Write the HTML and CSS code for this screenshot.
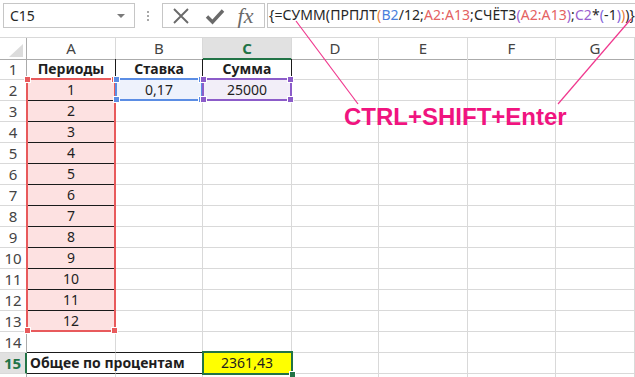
FILE: index.html
```html
<!DOCTYPE html>
<html lang="ru">
<head>
    <meta charset="UTF-8">
    <title>ПРПЛТ - массивная формула</title>
    <link rel="stylesheet" href="styles.css">
</head>
<body>
    <div class="app">
        <!-- Formula bar -->
        <div class="formula-bar">
            <div class="name-box"><span>C15</span><span class="arrow"></span></div>
            <div class="grip"><i></i><i></i><i></i></div>
            <div class="fx-buttons">
                <svg class="icon" width="18" height="18" viewBox="0 0 18 18"><path d="M2 2 L16 16 M16 2 L2 16" stroke="#6a6a6a" stroke-width="1.9" fill="none"/></svg>
                <svg class="icon" width="20" height="18" viewBox="0 0 20 18"><path d="M2 9.5 L7.5 15 L18 3.5" stroke="#6a6a6a" stroke-width="3.4" fill="none"/></svg>
                <span class="fx">fx</span>
            </div>
            <div class="formula-input">{=СУММ(ПРПЛТ<span class="f-orange">(</span><span class="f-blue">B2</span>/12;<span class="f-red">A2:A13</span>;СЧЁТЗ<span class="f-purple">(</span><span class="f-red">A2:A13</span><span class="f-purple">)</span>;<span class="f-purple">C2</span>*<span class="f-violet">(</span>-1<span class="f-violet">)</span><span class="f-orange">)</span>)}</div>
        </div>

        <!-- Sheet -->
        <div class="sheet">
            <div class="row head">
                <div class="c corner"><span class="tri"></span></div>
                <div class="c">A</div>
                <div class="c">B</div>
                <div class="c active">C</div>
                <div class="c">D</div>
                <div class="c">E</div>
                <div class="c">F</div>
                <div class="c">G</div>
            </div>
            <div class="row">
                <div class="c rh">1</div>
                <div class="c bold bk-r bk-b">Периоды</div>
                <div class="c bold bk-r bk-b">Ставка</div>
                <div class="c bold bk-r bk-b">Сумма</div>
                <div class="c"></div><div class="c"></div><div class="c"></div><div class="c"></div>
            </div>
            <div class="row">
                <div class="c rh">2</div>
                <div class="c pink bk-b">1</div>
                <div class="c blue">0,17</div>
                <div class="c lilac">25000</div>
                <div class="c"></div><div class="c"></div><div class="c"></div><div class="c"></div>
            </div>
            <div class="row">
                <div class="c rh">3</div>
                <div class="c pink bk-b">2</div>
                <div class="c"></div><div class="c"></div><div class="c"></div><div class="c"></div><div class="c"></div><div class="c"></div>
            </div>
            <div class="row">
                <div class="c rh">4</div>
                <div class="c pink bk-b">3</div>
                <div class="c"></div><div class="c"></div><div class="c"></div><div class="c"></div><div class="c"></div><div class="c"></div>
            </div>
            <div class="row">
                <div class="c rh">5</div>
                <div class="c pink bk-b">4</div>
                <div class="c"></div><div class="c"></div><div class="c"></div><div class="c"></div><div class="c"></div><div class="c"></div>
            </div>
            <div class="row">
                <div class="c rh">6</div>
                <div class="c pink bk-b">5</div>
                <div class="c"></div><div class="c"></div><div class="c"></div><div class="c"></div><div class="c"></div><div class="c"></div>
            </div>
            <div class="row">
                <div class="c rh">7</div>
                <div class="c pink bk-b">6</div>
                <div class="c"></div><div class="c"></div><div class="c"></div><div class="c"></div><div class="c"></div><div class="c"></div>
            </div>
            <div class="row">
                <div class="c rh">8</div>
                <div class="c pink bk-b">7</div>
                <div class="c"></div><div class="c"></div><div class="c"></div><div class="c"></div><div class="c"></div><div class="c"></div>
            </div>
            <div class="row">
                <div class="c rh">9</div>
                <div class="c pink bk-b">8</div>
                <div class="c"></div><div class="c"></div><div class="c"></div><div class="c"></div><div class="c"></div><div class="c"></div>
            </div>
            <div class="row">
                <div class="c rh">10</div>
                <div class="c pink bk-b">9</div>
                <div class="c"></div><div class="c"></div><div class="c"></div><div class="c"></div><div class="c"></div><div class="c"></div>
            </div>
            <div class="row">
                <div class="c rh">11</div>
                <div class="c pink bk-b">10</div>
                <div class="c"></div><div class="c"></div><div class="c"></div><div class="c"></div><div class="c"></div><div class="c"></div>
            </div>
            <div class="row">
                <div class="c rh">12</div>
                <div class="c pink bk-b">11</div>
                <div class="c"></div><div class="c"></div><div class="c"></div><div class="c"></div><div class="c"></div><div class="c"></div>
            </div>
            <div class="row">
                <div class="c rh">13</div>
                <div class="c pink">12</div>
                <div class="c"></div><div class="c"></div><div class="c"></div><div class="c"></div><div class="c"></div><div class="c"></div>
            </div>
            <div class="row">
                <div class="c rh">14</div>
                <div class="c bk-b"></div>
                <div class="c bk-b"></div>
                <div class="c"></div><div class="c"></div><div class="c"></div><div class="c"></div><div class="c"></div>
            </div>
            <div class="row">
                <div class="c rh active-row">15</div>
                <div class="c bold left spill bk-b">Общее по процентам</div>
                <div class="c bk-r bk-b"></div>
                <div class="c yellow">2361,43</div>
                <div class="c"></div><div class="c"></div><div class="c"></div><div class="c"></div>
            </div>
            <div class="row">
                <div class="c rh"></div>
                <div class="c"></div><div class="c"></div><div class="c"></div><div class="c"></div><div class="c"></div><div class="c"></div><div class="c"></div>
            </div>

            <!-- Range highlights from the formula -->
            <div class="range range-a"><i class="h tl"></i><i class="h tr"></i><i class="h bl"></i><i class="h br"></i></div>
            <div class="range range-b"><i class="h tl"></i><i class="h tr"></i><i class="h bl"></i><i class="h br"></i></div>
            <div class="range range-c"><i class="h tl"></i><i class="h tr"></i><i class="h bl"></i><i class="h br"></i></div>
            <div class="selection"><i class="fill-handle"></i></div>

            <div class="note">CTRL+SHIFT+Enter</div>
        </div>

        <svg class="callout" width="635" height="377" viewBox="0 0 635 377">
            <line x1="296" y1="21" x2="358" y2="104" stroke="#f0388e" stroke-width="1.2"/>
            <line x1="631" y1="19" x2="558" y2="104" stroke="#f0388e" stroke-width="1.2"/>
        </svg>
    </div>
</body>
</html>
```

FILE: styles.css
```css
* {
    margin: 0;
    padding: 0;
    box-sizing: border-box;
}

body {
    background: white;
    font-family: 'Noto Sans', 'Open Sans', sans-serif;
    overflow: hidden;
}

.app {
    position: relative;
    width: 635px;
    height: 377px;
    overflow: hidden;
}

/* Formula bar */
.formula-bar {
    height: 37px;
    display: flex;
    align-items: flex-start;
    padding: 3px 0 0 3px;
}

.name-box {
    width: 141px;
    height: 25px;
    border: 1px solid #c6c6c6;
    display: flex;
    align-items: center;
    justify-content: space-between;
    padding: 0 9px 0 6px;
    font-size: 14px;
    color: #262626;
}

.name-box .arrow {
    width: 0;
    height: 0;
    border-left: 4px solid transparent;
    border-right: 4px solid transparent;
    border-top: 4px solid #7a7a7a;
}

.grip {
    width: 29px;
    display: flex;
    flex-direction: column;
    align-items: center;
    gap: 2px;
    padding: 8px 0 0 0;
}

.grip i {
    width: 2px;
    height: 2px;
    background: #a8a8a8;
}

.fx-buttons {
    width: 111px;
    height: 25px;
    border: 1px solid #c6c6c6;
    display: flex;
    align-items: center;
    gap: 15px;
    padding-left: 9px;
}

.fx {
    font-family: 'Liberation Serif', serif;
    font-style: italic;
    font-size: 22px;
    color: #6a6a6a;
    line-height: 21px;
    margin-left: -2px;
}

.formula-input {
    flex: 1;
    height: 25px;
    margin-left: 2px;
    border: 1px solid #c6c6c6;
    border-right: none;
    padding-left: 1px;
    font-size: 14px;
    letter-spacing: 0.08px;
    line-height: 22px;
    white-space: nowrap;
    color: #262626;
}

.f-blue { color: #4a7fdc; }
.f-red { color: #e46262; }
.f-purple { color: #9a5fcf; }
.f-violet { color: #8060d8; }
.f-orange { color: #e6803a; }

/* Sheet */
.sheet {
    position: relative;
}

.row {
    display: grid;
    grid-template-columns: 27px 89px 87px 89px 87px 89px 88px 1fr;
    height: 21px;
}

.c {
    border-right: 1px solid #d9d9d9;
    border-bottom: 1px solid #d9d9d9;
    font-size: 14px;
    line-height: 20px;
    text-align: center;
    color: #1e1e1e;
    white-space: nowrap;
}

.row.head {
    height: 22px;
    border-top: 1px solid #d9d9d9;
}

.row.head .c {
    border-bottom-color: #ababab;
    color: #444;
    font-size: 15px;
}

.row.head .c.active {
    background: #e1e1e1;
    color: #217346;
    font-weight: bold;
    border-bottom: 2px solid #217346;
}

.corner {
    position: relative;
    border-right-color: #ababab !important;
}

.corner .tri {
    position: absolute;
    right: 3px;
    bottom: 2px;
    width: 0;
    height: 0;
    border-left: 14px solid transparent;
    border-bottom: 13px solid #dcdcdc;
}

.rh {
    color: #444;
    font-size: 15px;
    border-right-color: #ababab;
}

.rh.active-row {
    background: #e1e1e1;
    color: #217346;
    font-weight: bold;
    border-right: 2px solid #217346;
}

.bold { font-weight: bold; }
.left { text-align: left; padding-left: 3px; }
.spill { overflow: visible; position: relative; z-index: 1; }

.bk-r { border-right-color: #1a1a1a; }
.bk-b { border-bottom-color: #1a1a1a; }

.pink { background: #fde1e1; }
.blue { background: #eef2fc; }
.lilac { background: #f2eef8; }
.yellow { background: #ffff00; }

/* Formula reference ranges */
.range {
    position: absolute;
    border: 2px solid;
}

.range-a {
    left: 26px;
    top: 41px;
    width: 90px;
    height: 254px;
    border-color: #e85a5c;
    color: #e85a5c;
}

.range-b {
    left: 115px;
    top: 41px;
    width: 88px;
    height: 23px;
    border-color: #5b8de4;
    color: #5b8de4;
}

.range-c {
    left: 202px;
    top: 41px;
    width: 90px;
    height: 23px;
    border-color: #8c5cc9;
    color: #8c5cc9;
}

.h {
    position: absolute;
    width: 7px;
    height: 7px;
    background: currentColor;
    border: 1px solid white;
}

.h.tl { left: -4px; top: -4px; }
.h.tr { right: -4px; top: -4px; }
.h.bl { left: -4px; bottom: -4px; }
.h.br { right: -4px; bottom: -4px; }

.selection {
    position: absolute;
    left: 202px;
    top: 314px;
    width: 91px;
    height: 24px;
    border: 2px solid #217346;
}

.fill-handle {
    position: absolute;
    right: -5px;
    bottom: -5px;
    width: 7px;
    height: 7px;
    background: #217346;
    border: 1px solid white;
}

.note {
    position: absolute;
    left: 344px;
    top: 68px;
    font-family: 'Liberation Sans', Arial, sans-serif;
    font-weight: bold;
    font-size: 24px;
    line-height: 24px;
    color: #f0147f;
    white-space: nowrap;
}

.callout {
    position: absolute;
    left: 0;
    top: 0;
    pointer-events: none;
}
```
